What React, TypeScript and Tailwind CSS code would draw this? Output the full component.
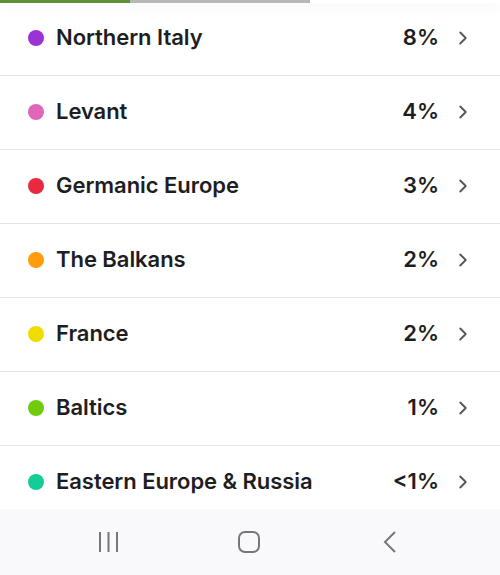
import { ChevronRight } from "lucide-react";

type Region = {
  name: string;
  pct: string;
  color: string;
};

const regions: Region[] = [
  { name: "Northern Italy", pct: "8%", color: "bg-[#9a33d6]" },
  { name: "Levant", pct: "4%", color: "bg-[#e066b8]" },
  { name: "Germanic Europe", pct: "3%", color: "bg-[#e8293f]" },
  { name: "The Balkans", pct: "2%", color: "bg-[#ff9b0c]" },
  { name: "France", pct: "2%", color: "bg-[#f1dc00]" },
  { name: "Baltics", pct: "1%", color: "bg-[#6fcb0c]" },
  { name: "Eastern Europe & Russia", pct: "<1%", color: "bg-[#14cc98]" },
];

const RegionRow = ({ region }: { region: Region }) => (
  <div className="flex h-[74px] shrink-0 items-center border-b border-[#e4e4e6] pb-[3px] pl-[28px] pr-[26px]">
    <span className={`mt-[1px] h-4 w-4 shrink-0 rounded-full ${region.color}`} />
    <span className="ml-3 flex-1 text-[22px] font-semibold tracking-[-0.05px] text-[#1e1e22]">
      {region.name}
    </span>
    <span className="text-[22px] font-semibold text-[#1e1e22]">{region.pct}</span>
    <ChevronRight className="ml-[13px] mt-[2px] h-[22px] w-[22px] text-[#555]" strokeWidth={2} />
  </div>
);

export default function App() {
  return (
    <div
      className="flex h-[575px] w-[500px] flex-col overflow-hidden bg-white"
      style={{ fontFamily: "Inter, 'Noto Sans', sans-serif" }}
    >
      <div className="relative flex-1 overflow-hidden">
        <div className="absolute left-0 top-0 z-10 flex h-[3px] w-full shadow-[0_4px_12px_rgba(0,0,0,0.08)]">
          <div className="h-full w-[130px] bg-[#5f8f3a]" />
          <div className="h-full w-[180px] bg-[#b8b8b8]" />
          <div className="h-full flex-1 bg-white" />
        </div>
        <div className="flex flex-col pt-[2px]">
          {regions.map((r) => (
            <RegionRow key={r.name} region={r} />
          ))}
        </div>
      </div>
      <nav className="flex h-[66px] shrink-0 items-center bg-[#f9f9fb] pl-[98px]">
        <svg width="22" height="22" viewBox="0 0 22 22" fill="none" stroke="#777" strokeWidth="2">
          <path d="M2 1v20M10.5 1v20M19 1v20" />
        </svg>
        <svg className="ml-[118px]" width="22" height="22" viewBox="0 0 22 22" fill="none" stroke="#777" strokeWidth="2">
          <rect x="1" y="1" width="20" height="20" rx="6" />
        </svg>
        <svg className="ml-[123px]" width="14" height="22" viewBox="0 0 14 22" fill="none" stroke="#777" strokeWidth="2">
          <path d="M12 1L2 11l10 10" />
        </svg>
      </nav>
    </div>
  );
}
